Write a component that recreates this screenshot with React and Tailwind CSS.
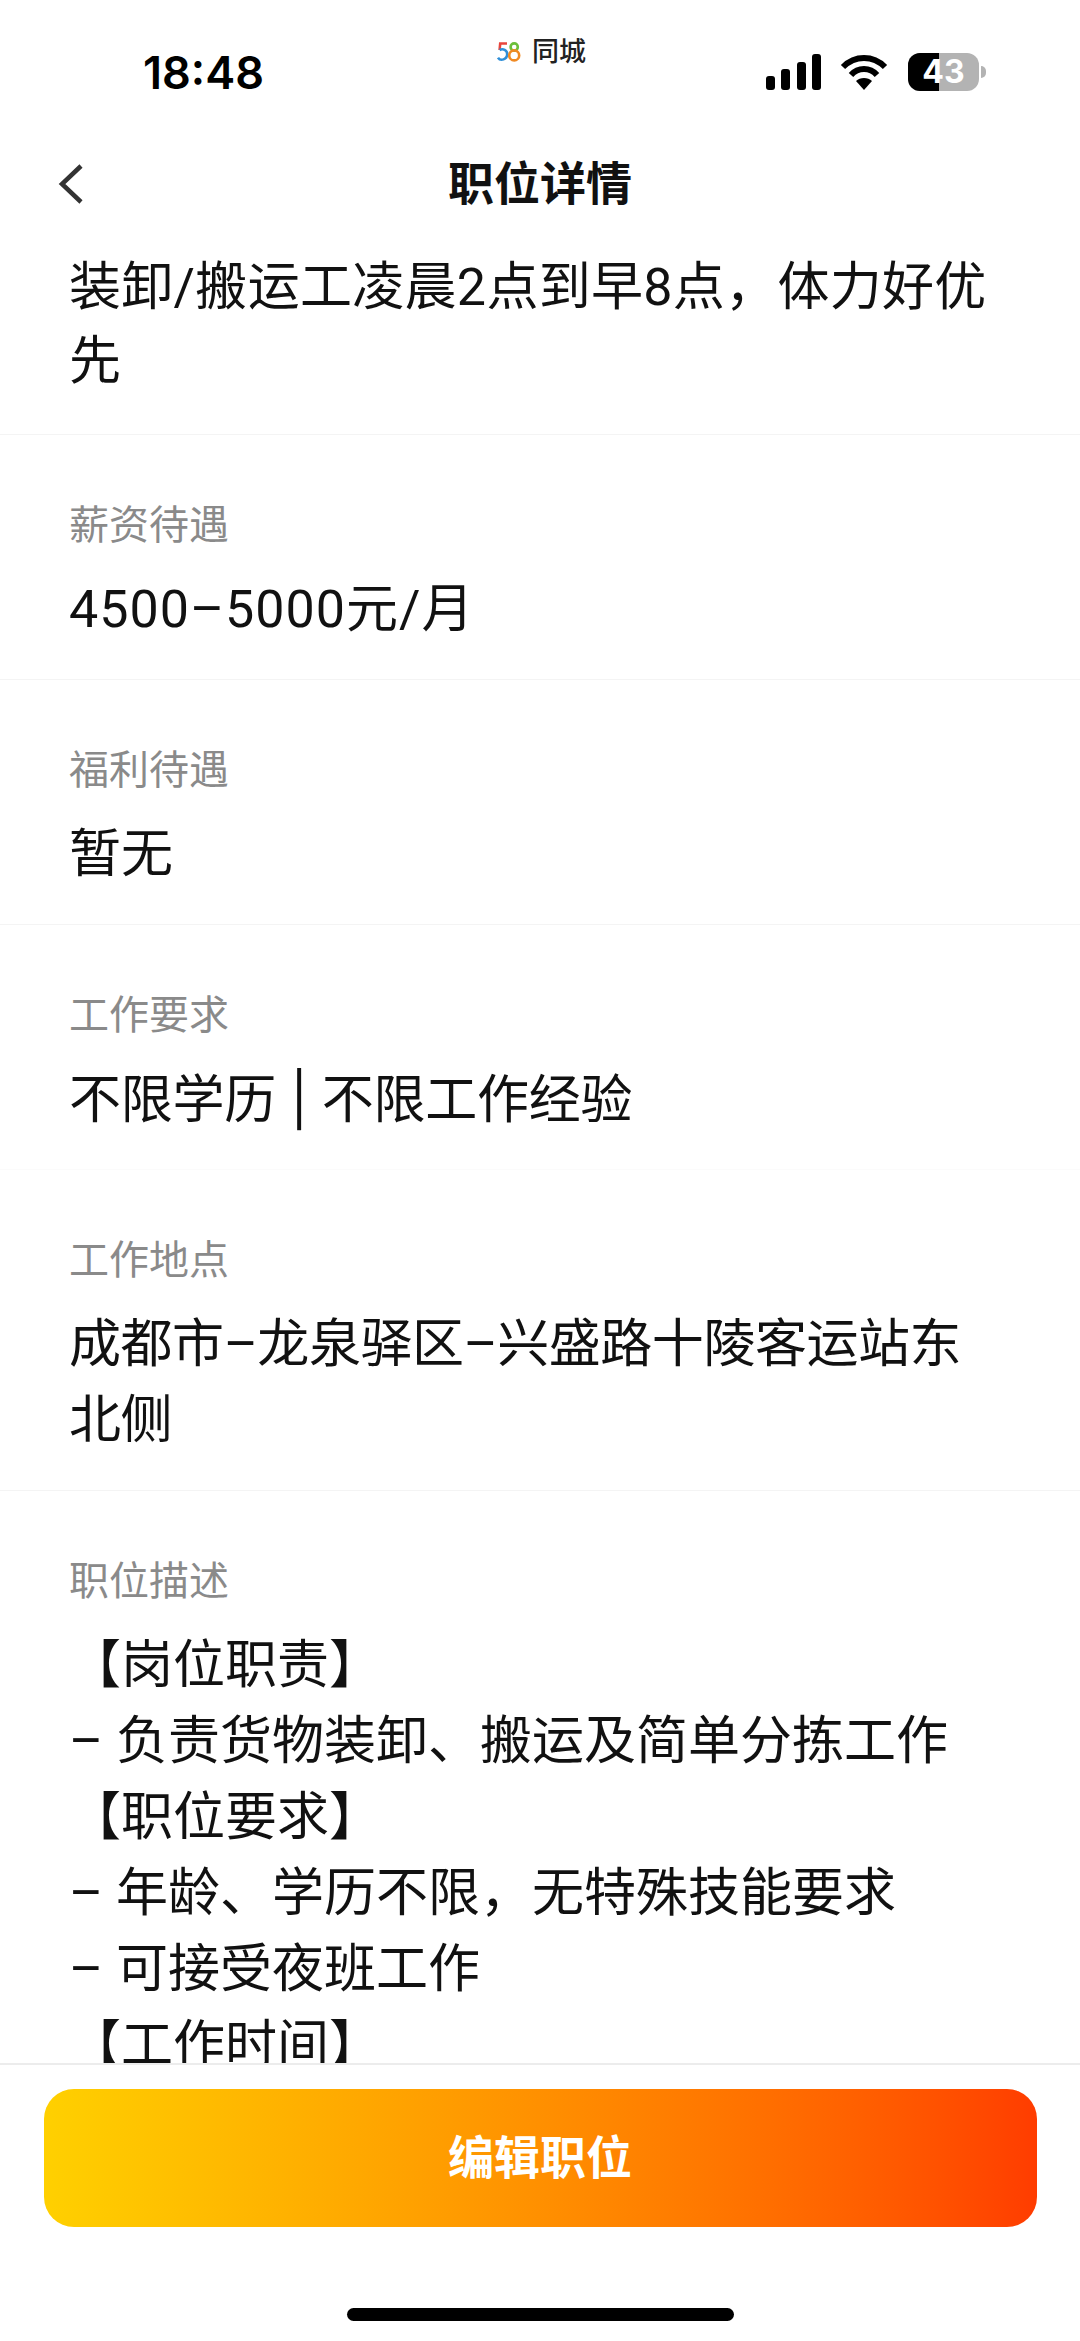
import React from 'react'

const FONT = "font-['Roboto','Noto_Sans_CJK_SC',sans-serif]"

function Logo58() {
  return (
    <svg width="24" height="20" viewBox="0 0 24 20" fill="none" strokeWidth="2.6">
      <path d="M10 1.5 H3.2 L2.6 8" stroke="#e8453c" />
      <path d="M2.6 8 C6 6.2 10.2 8 10.2 12 C10.2 17.5 3.5 19.6 1 15.6" stroke="#2f8fd8" />
      <circle cx="17.2" cy="5" r="3.6" stroke="#6cbf3a" />
      <circle cx="17.2" cy="13.4" r="5" stroke="#f08a24" />
    </svg>
  )
}

function StatusBar() {
  return (
    <div className="relative flex h-[130px] shrink-0 items-start justify-between pl-[143px] pr-[94px] pt-[46px] font-['Inter','Noto_Sans_CJK_SC',sans-serif]">
      <span className="text-[45px] font-semibold leading-[54px] text-black">18:48</span>
      <div className="absolute left-[497px] top-[36px] flex items-center gap-[11px]">
        <Logo58 />
        <span className="text-[27px] font-medium leading-[32px] text-[#222]">同城</span>
      </div>
      <div className="mt-[7px] flex items-center">
        <svg width="56" height="36" viewBox="0 0 56 36" fill="black">
          <rect x="0" y="22" width="9" height="14" rx="3" />
          <rect x="15" y="15" width="9" height="21" rx="3" />
          <rect x="31" y="8" width="9" height="28" rx="3" />
          <rect x="46" y="0" width="9" height="36" rx="3" />
        </svg>
        <svg className="ml-[18px]" width="48" height="36" viewBox="0 0 48 36" fill="none" stroke="black" strokeWidth="6">
          <path d="M3 13 C15 1 33 1 45 13" />
          <path d="M11 21 C18 13 30 13 37 21" />
          <path d="M24 36 L16 27 C20 23 28 23 32 27 Z" fill="black" stroke="none" />
        </svg>
        <div className="relative ml-[20px] flex h-[38px] w-[71px] overflow-hidden rounded-[12px] bg-[#b3b3b3]">
          <div className="h-full w-[31px] bg-black" />
          <span className="absolute inset-0 flex items-center justify-center text-[32px] font-bold text-white">43</span>
        </div>
        <div className="ml-[2px] h-[12px] w-[5px] rounded-r-full bg-[#b3b3b3]" />
      </div>
    </div>
  )
}

function Header() {
  return (
    <div className="relative flex h-[108px] shrink-0 items-center justify-center">
      <svg className="absolute left-[58px] top-[33px]" width="26" height="42" viewBox="0 0 26 42" fill="none" stroke="#333" strokeWidth="4.5">
        <path d="M23 3 L4 21 L23 39" />
      </svg>
      <span className="text-[46px] font-semibold leading-[60px] text-[#111]">职位详情</span>
    </div>
  )
}

function Field({ label, children, line = 'border-[#f4f4f4]', valueClass = '' }) {
  return (
    <div className={`border-b pl-[69px] pr-[80px] pt-[60px] pb-[31px] ${line}`}>
      <div className="text-[40px] leading-[62px] text-[#8a8a8a]">{label}</div>
      <div className={`mt-[15px] text-[52px] leading-[76px] text-[#111] ${valueClass}`}>{children}</div>
    </div>
  )
}

export default function App() {
  return (
    <div className={`flex h-screen w-full flex-col overflow-hidden bg-white ${FONT}`}>
      <StatusBar />
      <Header />
      <div className="min-h-0 flex-1 overflow-hidden">
        <div className="border-b border-[#f4f4f4] pl-[69px] pr-[80px] pt-[13px] pb-[35px] text-[52px] leading-[74px] tracking-[0.3px] text-[#111]">
          装卸/搬运工凌晨2点到早8点，体力好优先
        </div>
        <Field label="薪资待遇" valueClass="tracking-[1px]">4500–5000元/月</Field>
        <Field label="福利待遇">暂无</Field>
        <Field label="工作要求" line="border-[#fbfbfb]" valueClass="tracking-[-0.25px] font-['Inter','Noto_Sans_CJK_SC',sans-serif]">
          不限学历 | 不限工作经验
        </Field>
        <Field label="工作地点" valueClass="tracking-[-0.45px]">成都市–龙泉驿区–兴盛路十陵客运站东北侧</Field>
        <Field label="职位描述" line="border-transparent">
          <div>【岗位职责】</div>
          <div>– 负责货物装卸、搬运及简单分拣工作</div>
          <div>【职位要求】</div>
          <div>– 年龄、学历不限，无特殊技能要求</div>
          <div>– 可接受夜班工作</div>
          <div>【工作时间】</div>
        </Field>
      </div>
      <div className="flex h-[278px] shrink-0 flex-col items-center border-t-2 border-[#ececec] pt-[24px]">
        <button className="flex h-[138px] w-[993px] items-center justify-center rounded-[30px] bg-gradient-to-r from-[#ffd000] to-[#ff3c00] text-[46px] font-semibold text-white">
          编辑职位
        </button>
        <div className="mt-[81px] h-[13px] w-[387px] rounded-full bg-black" />
      </div>
    </div>
  )
}
